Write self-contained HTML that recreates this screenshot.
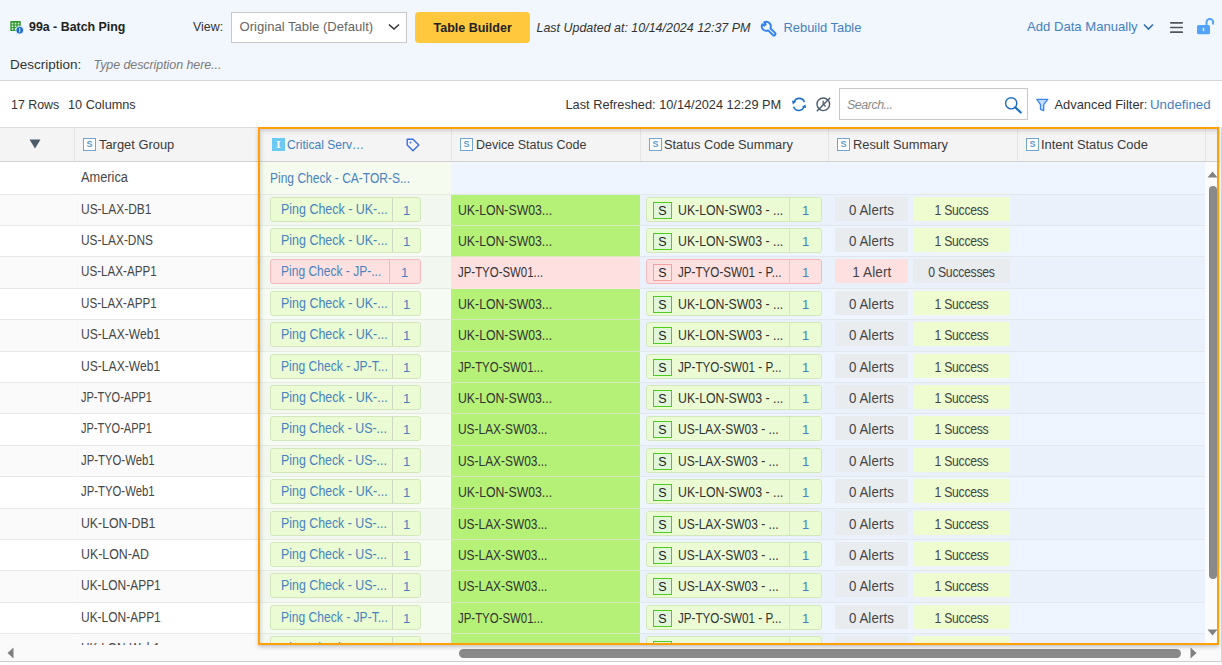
<!DOCTYPE html>
<html><head><meta charset="utf-8"><style>
*{box-sizing:border-box;margin:0;padding:0}
html,body{width:1222px;height:665px;overflow:hidden;background:#fff}
body{position:relative;font-family:"Liberation Sans",sans-serif;font-size:13px;color:#333}
.a{position:absolute;white-space:nowrap;line-height:16px}
.topbar{position:absolute;left:0;top:0;width:1222px;height:81px;background:#f2f7fd;border-bottom:1px solid #d5d8d8}
.sel{position:absolute;left:231px;top:12px;width:176px;height:31px;background:#fff;border:1px solid #c8c8c8}
.btn{position:absolute;left:415px;top:12px;width:115px;height:31px;background:#ffc83d;border-radius:4px}
.search{position:absolute;left:839px;top:88px;width:189px;height:32px;background:#fff;border:1px solid #c8c8c8}
.blue{color:#4580c0}
.hdr{position:absolute;left:0;top:127px;width:1220px;height:35px;background:#f4f4f4;border-top:1px solid #dcdcdc;border-bottom:1px solid #d2d2d2}
.vd{position:absolute;top:128px;width:1px;height:33px;background:#e4e4e4}
.sic{position:absolute;top:138px;width:13px;height:13px;border:1px solid #72a6d0;background:#fff;color:#5f9bc9;font-size:9px;line-height:11px;text-align:center;font-weight:bold}
.row{position:absolute;left:0;width:1205px;height:31.4px}
.row .c1{position:absolute;left:0;top:0;width:260px;height:100%;background:#fff;border-bottom:1px solid #e8e8e8;padding-left:81px;line-height:30.8px;font-size:13px;color:#464646}
.row.alt .c1{background:#fafafa}
.row .c2{position:absolute;left:260px;top:0;width:191px;height:100%;background:#f6fbf3;border-bottom:1px solid #e6ebe2}
.row.alt .c2{background:#f2f7ef}
.row .cb{position:absolute;left:451px;top:0;width:754px;height:100%;background:#eff5fe;border-bottom:1px solid #e2e7ed}
.row.alt .cb{background:#ebf1fa}
.r0 .c1,.r0 .c2,.r0 .cb{}
.r0 .c1{line-height:32px}
.r0 .c2{background:#f5fbef}
.lnk{position:absolute;left:10px;top:9px;line-height:16px;color:#4783c1;white-space:nowrap;font-size:13px}
.chip{position:absolute;left:9.5px;top:1.7px;width:151px;height:25.6px;background:#ebfbd3;border:1px solid #d3e8ba;border-radius:3px}
.chip.pink{background:#ffe0e0;border-color:#f5b9bb}
.chip .ct{position:absolute;left:10px;top:4px;line-height:16px;color:#4783c1;white-space:nowrap;font-size:13px}
.chip .cn{position:absolute;left:121px;top:0;width:29px;height:100%;border-left:1px solid #cfd8c4;color:#4783c1;text-align:center;line-height:26px}
.chip.pink .cn{left:118px;width:31px;border-left-color:#e8c0c0}
.c3{position:absolute;left:0;top:0;width:189px;height:calc(100% + 1px);border-bottom:1px solid #d6e9b8;background:#b5f177;padding-left:7px;line-height:32px;white-space:nowrap;font-size:13px}
.c3.pink{background:#ffe0e1;border-bottom-color:#fde3e8}
.chip4{position:absolute;left:195px;top:1.7px;width:175.5px;height:25.6px;background:#ebfbd3;border:1px solid #d3e8ba;border-radius:3px}
.chip4.pink{background:#ffe0e0;border-color:#f5b9bb}
.chip4 .sb{position:absolute;left:6px;top:4px;width:19px;height:17px;border:1.5px solid #4ccd20;background:#e2f6da;color:#222;font-size:12.5px;line-height:17px;text-align:center}
.chip4.pink .sb{border-color:#f4a0a0;background:#ffe2e2}
.chip4 .ct4{position:absolute;left:30.5px;top:5.5px;line-height:16px;white-space:nowrap;font-size:13px}
.chip4 .cn{position:absolute;left:142px;top:0;width:32px;height:100%;border-left:1px solid #d8e3c8;color:#4783c1;text-align:center;line-height:25px}
.chip4.pink .cn{border-left-color:#f0c4c4}
.al{position:absolute;left:384px;top:1.7px;width:73px;height:24.6px;background:#e8ecef;text-align:center;line-height:28.5px;font-size:12.5px;letter-spacing:0.1px;color:#444}
.al.pink{background:#ffe0e0}
.su{position:absolute;left:462px;top:1.7px;width:97px;height:24.6px;background:#eefccf;text-align:center;line-height:28.5px;font-size:12.5px;letter-spacing:-0.3px;color:#444}
.su.grey{background:#e8ecef}
.frame{position:absolute;left:258px;top:127px;width:961px;height:518px;border:2px solid #ff9f0a;box-shadow:0 2px 4px rgba(0,0,0,.22), inset 2px 3px 4px -1px rgba(0,0,0,.16);pointer-events:none}
.vtrack{position:absolute;left:1205px;top:162px;width:12px;height:481px;background:#fbfbfb}
.vthumb{position:absolute;left:1209px;top:186px;width:8px;height:393px;background:#8a8a8a;border-radius:4px}
.htrack{position:absolute;left:0;top:645px;width:1222px;height:17px;background:#fafafa;border-bottom:1px solid #cfcfcf}
.hthumb{position:absolute;left:459px;top:649px;width:722px;height:9px;background:#898989;border-radius:4.5px}

.row .c1:before{content:'';position:absolute;left:74px;top:0;width:1px;height:100%;background:rgba(255,255,255,.6)}

</style></head><body>
<div class="topbar"></div>
<svg class="a" style="left:10px;top:21px" width="15" height="15" viewBox="0 0 15 15"><rect x="0.3" y="0" width="10.5" height="10" rx="0.8" fill="#2e9a2e"/><g fill="#e3f3e3"><rect x="1.8" y="1.7" width="1.5" height="1.7"/><rect x="4.8" y="1.7" width="1.5" height="1.7"/><rect x="7.8" y="1.7" width="1.5" height="1.7"/><rect x="1.8" y="4.4" width="1.5" height="1.7"/><rect x="4.8" y="4.4" width="1.5" height="1.7"/><rect x="7.8" y="4.4" width="1.5" height="1.7"/><rect x="1.8" y="7.1" width="1.5" height="1.7"/><rect x="4.8" y="7.1" width="1.5" height="1.7"/></g><circle cx="9.7" cy="9.2" r="3.9" fill="#1b6cc9" stroke="#f2f7fd" stroke-width="0.9"/><rect x="9.15" y="7.0" width="1.1" height="4.4" fill="#d4e4f6"/></svg>
<div class="a" style="left:29px;top:19px;font-weight:bold;color:#222;font-size:12.4px">99a - Batch Ping</div>
<div class="a" style="left:193px;top:18.5px;color:#333;font-size:12.4px">View:</div>
<div class="sel"></div>
<div class="a" style="left:239.5px;top:19px;color:#666;font-size:13.1px">Original Table (Default)</div>
<svg class="a" style="left:388px;top:23px" width="12" height="8" viewBox="0 0 12 8"><path d="M1 1.5 L6 6 L11 1.5" fill="none" stroke="#333" stroke-width="1.6"/></svg>
<div class="btn"></div>
<div class="a" style="left:433.5px;top:19.5px;font-weight:bold;color:#222;font-size:12.5px">Table Builder</div>
<div class="a" style="left:536.5px;top:19.5px;font-style:italic;color:#333;font-size:12.46px">Last Updated at: 10/14/2024 12:37 PM</div>
<svg class="a" style="left:760px;top:20px" width="17" height="17" viewBox="0 0 17 17"><path transform="translate(0.9,0.9) scale(0.9)" d="M10.52,8.12 L15.7,13.3 A1.7,1.7 0 0 1 13.3,15.7 L8.12,10.52 A5,5 0 0 1 1.62,3.60 L3.9,5.3 L5.3,3.9 L3.60,1.62 A5,5 0 0 1 10.52,8.12 Z" fill="none" stroke="#2f7ff5" stroke-width="2.1" stroke-linejoin="round"/></svg>
<div class="a blue" style="left:783.5px;top:20px;font-size:12.9px">Rebuild Table</div>
<div class="a blue" style="left:1027px;top:18.5px;font-size:13.1px">Add Data Manually</div>
<svg class="a" style="left:1143px;top:23px" width="11" height="8" viewBox="0 0 11 8"><path d="M1 1.5 L5.5 6 L10 1.5" fill="none" stroke="#2f6fb0" stroke-width="1.6"/></svg>
<svg class="a" style="left:1169px;top:21px" width="15" height="13" viewBox="0 0 15 13"><path d="M1.8 1.8 H13.2 M1.8 6.5 H13.2 M1.8 11.2 H13.2" stroke="#50555c" stroke-width="1.7" stroke-linecap="round"/></svg>
<svg class="a" style="left:1196px;top:17px" width="18" height="18" viewBox="0 0 18 18"><path d="M10.5 8.5 V5.2 A3.3 3.3 0 0 1 17.1 5.2 V6.8" fill="none" stroke="#53a3fa" stroke-width="2" stroke-linecap="round"/><rect x="1" y="8" width="13" height="9.2" rx="1.5" fill="#53a3fa"/><rect x="6.8" y="10.8" width="1.4" height="3.4" fill="#e8f2ff"/></svg>
<div class="a" style="left:10px;top:56.5px;color:#333;font-size:13.5px">Description:</div>
<div class="a" style="left:93.5px;top:56.5px;font-style:italic;color:#7a7a7a;font-size:12.5px;letter-spacing:-0.08px">Type description here...</div>

<div class="a" style="left:11px;top:96.5px;color:#333;font-size:12.4px">17 Rows</div>
<div class="a" style="left:68px;top:96.5px;color:#333;font-size:12.7px">10 Columns</div>
<div class="a" style="left:565.5px;top:96.8px;color:#333;font-size:12.78px">Last Refreshed: 10/14/2024 12:29 PM</div>
<svg class="a" style="left:791px;top:96px" width="16" height="16" viewBox="0 0 16 16"><path d="M3.2,6.2 A5.3,5.3 0 0 1 13.3,6.0" fill="none" stroke="#1c6fca" stroke-width="1.6"/><path d="M13.0,10.2 A5.3,5.3 0 0 1 2.7,10.6" fill="none" stroke="#1c6fca" stroke-width="1.6"/><path d="M1.0,4.6 L5.2,5.6 L1.8,8.4 Z" fill="#1c6fca"/><path d="M15.2,12.0 L10.9,10.9 L14.3,8.4 Z" fill="#1c6fca"/></svg>
<svg class="a" style="left:815px;top:96px" width="17" height="17" viewBox="0 0 17 17"><circle cx="8.3" cy="8.3" r="6.3" fill="none" stroke="#4d5d6b" stroke-width="1.4"/><path d="M8.2 4.8 V8.3 L10.6 10.4" fill="none" stroke="#4d5d6b" stroke-width="1.3"/><path d="M1.8 15.2 L15.2 1.8" stroke="#4d5d6b" stroke-width="1.5"/></svg>
<div class="search"></div>
<div class="a" style="left:847px;top:96.5px;font-style:italic;color:#8a8a8a;font-size:12.5px;letter-spacing:-0.5px">Search...</div>
<svg class="a" style="left:1004px;top:96px" width="19" height="19" viewBox="0 0 19 19"><circle cx="7.2" cy="7.3" r="5.6" fill="none" stroke="#1d6dc0" stroke-width="1.4"/><path d="M11.2 11.3 L16.8 16.6" stroke="#1d6dc0" stroke-width="2.1" stroke-linecap="round"/></svg>
<svg class="a" style="left:1036px;top:98px" width="13" height="14" viewBox="0 0 13 14"><path d="M0.9 1.3 H11.8 L7.7 6.6 V12.6 L4.5 11.3 V6.6 Z" fill="#c4dbfa" stroke="#3a86f0" stroke-width="1.3" stroke-linejoin="round"/></svg>
<div class="a" style="left:1054.5px;top:96.5px;color:#333;font-size:12.87px">Advanced Filter:</div>
<div class="a blue" style="left:1150px;top:96.5px;font-size:13.3px">Undefined</div>

<div class="hdr"></div>
<svg class="a" style="left:28.5px;top:139px" width="12" height="10" viewBox="0 0 12 10"><path d="M0.5 0.5 H11.5 L6 9.5 Z" fill="#4d5b68"/></svg>
<div class="vd" style="left:74px"></div>
<div class="sic" style="left:83px">S</div>
<div class="a" style="color:#3a3a3a;left:99px;top:137px;font-size:12.9px">Target Group</div>
<div class="a" style="left:272px;top:138px;width:13px;height:13px;background:#6cc9f2;color:#fff;font-family:'Liberation Serif',serif;font-weight:bold;font-size:11px;line-height:13px;text-align:center">I</div>
<div class="a blue" style="left:287px;top:137px;font-size:12.05px">Critical Serv…</div>
<svg class="a" style="left:405.5px;top:138px" width="14" height="14" viewBox="0 0 14 14"><path d="M1.2 1.2 H7 L12.8 7 L7 12.8 L1.2 7 Z" fill="none" stroke="#3b6fe0" stroke-width="1.4" stroke-linejoin="round"/><circle cx="4.5" cy="4.5" r="0.9" fill="#3b6fe0"/></svg>
<div class="vd" style="left:451px"></div>
<div class="sic" style="left:460px">S</div>
<div class="a" style="color:#3a3a3a;left:476px;top:137px;font-size:12.5px">Device Status Code</div>
<div class="vd" style="left:640px"></div>
<div class="sic" style="left:649px">S</div>
<div class="a" style="color:#3a3a3a;left:664px;top:137px;font-size:12.82px">Status Code Summary</div>
<div class="vd" style="left:828px"></div>
<div class="sic" style="left:837px">S</div>
<div class="a" style="color:#3a3a3a;left:853px;top:137px;font-size:12.85px">Result Summary</div>
<div class="vd" style="left:1017px"></div>
<div class="sic" style="left:1026px">S</div>
<div class="a" style="color:#3a3a3a;left:1041px;top:137px;font-size:12.92px">Intent Status Code</div>
<div class="vd" style="left:1205px"></div>

<div style="position:absolute;left:0;top:162px;width:1222px;height:483px;overflow:hidden">
<div style="position:absolute;left:0;top:-162px;width:1222px;height:665px">
<div class="row r0" style="top:162px;height:33px"><div class="c1"><span style="display:inline-block;font-size:13.8px;transform:scaleX(0.9289);transform-origin:0 50%">America</span></div><div class="c2 first"><span class="lnk"><span style="display:inline-block;font-size:13.8px;transform:scaleX(0.8712);transform-origin:0 50%">Ping Check - CA-TOR-S...</span></span></div><div class="cb"></div></div>
<div class="row alt" style="top:195px;height:31px"><div class="c1"><span style="display:inline-block;font-size:13.8px;transform:scaleX(0.8674);transform-origin:0 50%">US-LAX-DB1</span></div><div class="c2"><div class="chip"><span class="ct"><span style="display:inline-block;font-size:13.8px;transform:scaleX(0.9032);transform-origin:0 50%">Ping Check - UK-...</span></span><span class="cn">1</span></div></div><div class="cb"><div class="c3"><span style="display:inline-block;font-size:13.8px;transform:scaleX(0.8894);transform-origin:0 50%">UK-LON-SW03...</span></div><div class="chip4"><span class="sb">S</span><span class="ct4"><span style="display:inline-block;font-size:13.8px;transform:scaleX(0.8912);transform-origin:0 50%">UK-LON-SW03 - ...</span></span><span class="cn">1</span></div><div class="al"><span style="display:inline-block;font-size:13.8px;transform:scaleX(0.9611);transform-origin:50% 50%">0 Alerts</span></div><div class="su"><span style="display:inline-block;font-size:13.8px;transform:scaleX(0.8857);transform-origin:50% 50%">1 Success</span></div></div></div>
<div class="row " style="top:226px;height:31px"><div class="c1"><span style="display:inline-block;font-size:13.8px;transform:scaleX(0.8603);transform-origin:0 50%">US-LAX-DNS</span></div><div class="c2"><div class="chip"><span class="ct"><span style="display:inline-block;font-size:13.8px;transform:scaleX(0.9032);transform-origin:0 50%">Ping Check - UK-...</span></span><span class="cn">1</span></div></div><div class="cb"><div class="c3"><span style="display:inline-block;font-size:13.8px;transform:scaleX(0.8894);transform-origin:0 50%">UK-LON-SW03...</span></div><div class="chip4"><span class="sb">S</span><span class="ct4"><span style="display:inline-block;font-size:13.8px;transform:scaleX(0.8912);transform-origin:0 50%">UK-LON-SW03 - ...</span></span><span class="cn">1</span></div><div class="al"><span style="display:inline-block;font-size:13.8px;transform:scaleX(0.9611);transform-origin:50% 50%">0 Alerts</span></div><div class="su"><span style="display:inline-block;font-size:13.8px;transform:scaleX(0.8857);transform-origin:50% 50%">1 Success</span></div></div></div>
<div class="row alt" style="top:257px;height:32px"><div class="c1"><span style="display:inline-block;font-size:13.8px;transform:scaleX(0.8443);transform-origin:0 50%">US-LAX-APP1</span></div><div class="c2"><div class="chip pink"><span class="ct"><span style="display:inline-block;font-size:13.8px;transform:scaleX(0.8717);transform-origin:0 50%">Ping Check - JP-...</span></span><span class="cn">1</span></div></div><div class="cb"><div class="c3 pink"><span style="display:inline-block;font-size:13.8px;transform:scaleX(0.8282);transform-origin:0 50%">JP-TYO-SW01...</span></div><div class="chip4 pink"><span class="sb">S</span><span class="ct4"><span style="display:inline-block;font-size:13.8px;transform:scaleX(0.8446);transform-origin:0 50%">JP-TYO-SW01 - P...</span></span><span class="cn">1</span></div><div class="al pink"><span style="display:inline-block;font-size:13.8px;transform:scaleX(0.9816);transform-origin:50% 50%">1 Alert</span></div><div class="su grey"><span style="display:inline-block;font-size:13.8px;transform:scaleX(0.8834);transform-origin:50% 50%">0 Successes</span></div></div></div>
<div class="row " style="top:289px;height:31px"><div class="c1"><span style="display:inline-block;font-size:13.8px;transform:scaleX(0.8443);transform-origin:0 50%">US-LAX-APP1</span></div><div class="c2"><div class="chip"><span class="ct"><span style="display:inline-block;font-size:13.8px;transform:scaleX(0.9032);transform-origin:0 50%">Ping Check - UK-...</span></span><span class="cn">1</span></div></div><div class="cb"><div class="c3"><span style="display:inline-block;font-size:13.8px;transform:scaleX(0.8894);transform-origin:0 50%">UK-LON-SW03...</span></div><div class="chip4"><span class="sb">S</span><span class="ct4"><span style="display:inline-block;font-size:13.8px;transform:scaleX(0.8912);transform-origin:0 50%">UK-LON-SW03 - ...</span></span><span class="cn">1</span></div><div class="al"><span style="display:inline-block;font-size:13.8px;transform:scaleX(0.9611);transform-origin:50% 50%">0 Alerts</span></div><div class="su"><span style="display:inline-block;font-size:13.8px;transform:scaleX(0.8857);transform-origin:50% 50%">1 Success</span></div></div></div>
<div class="row alt" style="top:320px;height:32px"><div class="c1"><span style="display:inline-block;font-size:13.8px;transform:scaleX(0.8768);transform-origin:0 50%">US-LAX-Web1</span></div><div class="c2"><div class="chip"><span class="ct"><span style="display:inline-block;font-size:13.8px;transform:scaleX(0.9032);transform-origin:0 50%">Ping Check - UK-...</span></span><span class="cn">1</span></div></div><div class="cb"><div class="c3"><span style="display:inline-block;font-size:13.8px;transform:scaleX(0.8894);transform-origin:0 50%">UK-LON-SW03...</span></div><div class="chip4"><span class="sb">S</span><span class="ct4"><span style="display:inline-block;font-size:13.8px;transform:scaleX(0.8912);transform-origin:0 50%">UK-LON-SW03 - ...</span></span><span class="cn">1</span></div><div class="al"><span style="display:inline-block;font-size:13.8px;transform:scaleX(0.9611);transform-origin:50% 50%">0 Alerts</span></div><div class="su"><span style="display:inline-block;font-size:13.8px;transform:scaleX(0.8857);transform-origin:50% 50%">1 Success</span></div></div></div>
<div class="row " style="top:352px;height:31px"><div class="c1"><span style="display:inline-block;font-size:13.8px;transform:scaleX(0.8768);transform-origin:0 50%">US-LAX-Web1</span></div><div class="c2"><div class="chip"><span class="ct"><span style="display:inline-block;font-size:13.8px;transform:scaleX(0.8758);transform-origin:0 50%">Ping Check - JP-T...</span></span><span class="cn">1</span></div></div><div class="cb"><div class="c3"><span style="display:inline-block;font-size:13.8px;transform:scaleX(0.8282);transform-origin:0 50%">JP-TYO-SW01...</span></div><div class="chip4"><span class="sb">S</span><span class="ct4"><span style="display:inline-block;font-size:13.8px;transform:scaleX(0.8446);transform-origin:0 50%">JP-TYO-SW01 - P...</span></span><span class="cn">1</span></div><div class="al"><span style="display:inline-block;font-size:13.8px;transform:scaleX(0.9611);transform-origin:50% 50%">0 Alerts</span></div><div class="su"><span style="display:inline-block;font-size:13.8px;transform:scaleX(0.8857);transform-origin:50% 50%">1 Success</span></div></div></div>
<div class="row alt" style="top:383px;height:31px"><div class="c1"><span style="display:inline-block;font-size:13.8px;transform:scaleX(0.7980);transform-origin:0 50%">JP-TYO-APP1</span></div><div class="c2"><div class="chip"><span class="ct"><span style="display:inline-block;font-size:13.8px;transform:scaleX(0.9032);transform-origin:0 50%">Ping Check - UK-...</span></span><span class="cn">1</span></div></div><div class="cb"><div class="c3"><span style="display:inline-block;font-size:13.8px;transform:scaleX(0.8894);transform-origin:0 50%">UK-LON-SW03...</span></div><div class="chip4"><span class="sb">S</span><span class="ct4"><span style="display:inline-block;font-size:13.8px;transform:scaleX(0.8912);transform-origin:0 50%">UK-LON-SW03 - ...</span></span><span class="cn">1</span></div><div class="al"><span style="display:inline-block;font-size:13.8px;transform:scaleX(0.9611);transform-origin:50% 50%">0 Alerts</span></div><div class="su"><span style="display:inline-block;font-size:13.8px;transform:scaleX(0.8857);transform-origin:50% 50%">1 Success</span></div></div></div>
<div class="row " style="top:414px;height:32px"><div class="c1"><span style="display:inline-block;font-size:13.8px;transform:scaleX(0.7980);transform-origin:0 50%">JP-TYO-APP1</span></div><div class="c2"><div class="chip"><span class="ct"><span style="display:inline-block;font-size:13.8px;transform:scaleX(0.8971);transform-origin:0 50%">Ping Check - US-...</span></span><span class="cn">1</span></div></div><div class="cb"><div class="c3"><span style="display:inline-block;font-size:13.8px;transform:scaleX(0.8632);transform-origin:0 50%">US-LAX-SW03...</span></div><div class="chip4"><span class="sb">S</span><span class="ct4"><span style="display:inline-block;font-size:13.8px;transform:scaleX(0.8687);transform-origin:0 50%">US-LAX-SW03 - ...</span></span><span class="cn">1</span></div><div class="al"><span style="display:inline-block;font-size:13.8px;transform:scaleX(0.9611);transform-origin:50% 50%">0 Alerts</span></div><div class="su"><span style="display:inline-block;font-size:13.8px;transform:scaleX(0.8857);transform-origin:50% 50%">1 Success</span></div></div></div>
<div class="row alt" style="top:446px;height:31px"><div class="c1"><span style="display:inline-block;font-size:13.8px;transform:scaleX(0.8228);transform-origin:0 50%">JP-TYO-Web1</span></div><div class="c2"><div class="chip"><span class="ct"><span style="display:inline-block;font-size:13.8px;transform:scaleX(0.8971);transform-origin:0 50%">Ping Check - US-...</span></span><span class="cn">1</span></div></div><div class="cb"><div class="c3"><span style="display:inline-block;font-size:13.8px;transform:scaleX(0.8632);transform-origin:0 50%">US-LAX-SW03...</span></div><div class="chip4"><span class="sb">S</span><span class="ct4"><span style="display:inline-block;font-size:13.8px;transform:scaleX(0.8687);transform-origin:0 50%">US-LAX-SW03 - ...</span></span><span class="cn">1</span></div><div class="al"><span style="display:inline-block;font-size:13.8px;transform:scaleX(0.9611);transform-origin:50% 50%">0 Alerts</span></div><div class="su"><span style="display:inline-block;font-size:13.8px;transform:scaleX(0.8857);transform-origin:50% 50%">1 Success</span></div></div></div>
<div class="row " style="top:477px;height:32px"><div class="c1"><span style="display:inline-block;font-size:13.8px;transform:scaleX(0.8228);transform-origin:0 50%">JP-TYO-Web1</span></div><div class="c2"><div class="chip"><span class="ct"><span style="display:inline-block;font-size:13.8px;transform:scaleX(0.9032);transform-origin:0 50%">Ping Check - UK-...</span></span><span class="cn">1</span></div></div><div class="cb"><div class="c3"><span style="display:inline-block;font-size:13.8px;transform:scaleX(0.8894);transform-origin:0 50%">UK-LON-SW03...</span></div><div class="chip4"><span class="sb">S</span><span class="ct4"><span style="display:inline-block;font-size:13.8px;transform:scaleX(0.8912);transform-origin:0 50%">UK-LON-SW03 - ...</span></span><span class="cn">1</span></div><div class="al"><span style="display:inline-block;font-size:13.8px;transform:scaleX(0.9611);transform-origin:50% 50%">0 Alerts</span></div><div class="su"><span style="display:inline-block;font-size:13.8px;transform:scaleX(0.8857);transform-origin:50% 50%">1 Success</span></div></div></div>
<div class="row alt" style="top:509px;height:31px"><div class="c1"><span style="display:inline-block;font-size:13.8px;transform:scaleX(0.8907);transform-origin:0 50%">UK-LON-DB1</span></div><div class="c2"><div class="chip"><span class="ct"><span style="display:inline-block;font-size:13.8px;transform:scaleX(0.8971);transform-origin:0 50%">Ping Check - US-...</span></span><span class="cn">1</span></div></div><div class="cb"><div class="c3"><span style="display:inline-block;font-size:13.8px;transform:scaleX(0.8632);transform-origin:0 50%">US-LAX-SW03...</span></div><div class="chip4"><span class="sb">S</span><span class="ct4"><span style="display:inline-block;font-size:13.8px;transform:scaleX(0.8687);transform-origin:0 50%">US-LAX-SW03 - ...</span></span><span class="cn">1</span></div><div class="al"><span style="display:inline-block;font-size:13.8px;transform:scaleX(0.9611);transform-origin:50% 50%">0 Alerts</span></div><div class="su"><span style="display:inline-block;font-size:13.8px;transform:scaleX(0.8857);transform-origin:50% 50%">1 Success</span></div></div></div>
<div class="row " style="top:540px;height:31px"><div class="c1"><span style="display:inline-block;font-size:13.8px;transform:scaleX(0.8949);transform-origin:0 50%">UK-LON-AD</span></div><div class="c2"><div class="chip"><span class="ct"><span style="display:inline-block;font-size:13.8px;transform:scaleX(0.8971);transform-origin:0 50%">Ping Check - US-...</span></span><span class="cn">1</span></div></div><div class="cb"><div class="c3"><span style="display:inline-block;font-size:13.8px;transform:scaleX(0.8632);transform-origin:0 50%">US-LAX-SW03...</span></div><div class="chip4"><span class="sb">S</span><span class="ct4"><span style="display:inline-block;font-size:13.8px;transform:scaleX(0.8687);transform-origin:0 50%">US-LAX-SW03 - ...</span></span><span class="cn">1</span></div><div class="al"><span style="display:inline-block;font-size:13.8px;transform:scaleX(0.9611);transform-origin:50% 50%">0 Alerts</span></div><div class="su"><span style="display:inline-block;font-size:13.8px;transform:scaleX(0.8857);transform-origin:50% 50%">1 Success</span></div></div></div>
<div class="row alt" style="top:571px;height:32px"><div class="c1"><span style="display:inline-block;font-size:13.8px;transform:scaleX(0.8671);transform-origin:0 50%">UK-LON-APP1</span></div><div class="c2"><div class="chip"><span class="ct"><span style="display:inline-block;font-size:13.8px;transform:scaleX(0.8971);transform-origin:0 50%">Ping Check - US-...</span></span><span class="cn">1</span></div></div><div class="cb"><div class="c3"><span style="display:inline-block;font-size:13.8px;transform:scaleX(0.8632);transform-origin:0 50%">US-LAX-SW03...</span></div><div class="chip4"><span class="sb">S</span><span class="ct4"><span style="display:inline-block;font-size:13.8px;transform:scaleX(0.8687);transform-origin:0 50%">US-LAX-SW03 - ...</span></span><span class="cn">1</span></div><div class="al"><span style="display:inline-block;font-size:13.8px;transform:scaleX(0.9611);transform-origin:50% 50%">0 Alerts</span></div><div class="su"><span style="display:inline-block;font-size:13.8px;transform:scaleX(0.8857);transform-origin:50% 50%">1 Success</span></div></div></div>
<div class="row " style="top:603px;height:31px"><div class="c1"><span style="display:inline-block;font-size:13.8px;transform:scaleX(0.8671);transform-origin:0 50%">UK-LON-APP1</span></div><div class="c2"><div class="chip"><span class="ct"><span style="display:inline-block;font-size:13.8px;transform:scaleX(0.8758);transform-origin:0 50%">Ping Check - JP-T...</span></span><span class="cn">1</span></div></div><div class="cb"><div class="c3"><span style="display:inline-block;font-size:13.8px;transform:scaleX(0.8282);transform-origin:0 50%">JP-TYO-SW01...</span></div><div class="chip4"><span class="sb">S</span><span class="ct4"><span style="display:inline-block;font-size:13.8px;transform:scaleX(0.8446);transform-origin:0 50%">JP-TYO-SW01 - P...</span></span><span class="cn">1</span></div><div class="al"><span style="display:inline-block;font-size:13.8px;transform:scaleX(0.9611);transform-origin:50% 50%">0 Alerts</span></div><div class="su"><span style="display:inline-block;font-size:13.8px;transform:scaleX(0.8857);transform-origin:50% 50%">1 Success</span></div></div></div>
<div class="row alt" style="top:634px;height:32px"><div class="c1"><span style="display:inline-block;font-size:13.8px;transform:scaleX(0.8535);transform-origin:0 50%">UK-LON-Web1</span></div><div class="c2"><div class="chip"><span class="ct"><span style="display:inline-block;font-size:13.8px;transform:scaleX(0.8971);transform-origin:0 50%">Ping Check - US-...</span></span><span class="cn">1</span></div></div><div class="cb"><div class="c3"><span style="display:inline-block;font-size:13.8px;transform:scaleX(0.8632);transform-origin:0 50%">US-LAX-SW03...</span></div><div class="chip4"><span class="sb">S</span><span class="ct4"><span style="display:inline-block;font-size:13.8px;transform:scaleX(0.8687);transform-origin:0 50%">US-LAX-SW03 - ...</span></span><span class="cn">1</span></div><div class="al"><span style="display:inline-block;font-size:13.8px;transform:scaleX(0.9611);transform-origin:50% 50%">0 Alerts</span></div><div class="su"><span style="display:inline-block;font-size:13.8px;transform:scaleX(0.8857);transform-origin:50% 50%">1 Success</span></div></div></div>
</div></div>
<div class="vtrack"></div>
<svg class="a" style="left:1207px;top:171px" width="11" height="7" viewBox="0 0 11 7"><path d="M0.5 6.5 L5.5 0.5 L10.5 6.5 Z" fill="#808080"/></svg>
<div class="vthumb"></div>
<svg class="a" style="left:1207px;top:629px" width="11" height="7" viewBox="0 0 11 7"><path d="M0.5 0.5 L5.5 6.5 L10.5 0.5 Z" fill="#808080"/></svg>
<div class="htrack"></div>
<div class="hthumb"></div>
<svg class="a" style="left:7px;top:647px" width="7" height="12" viewBox="0 0 7 12"><path d="M6.5 0.5 V11.5 L0.5 6 Z" fill="#808080"/></svg>
<svg class="a" style="left:1190px;top:647px" width="7" height="12" viewBox="0 0 7 12"><path d="M0.5 0.5 V11.5 L6.5 6 Z" fill="#808080"/></svg>
<div style="position:absolute;left:1221px;top:127px;width:1px;height:535px;background:#d8d8d8"></div>
<div class="frame"></div>

</body></html>
